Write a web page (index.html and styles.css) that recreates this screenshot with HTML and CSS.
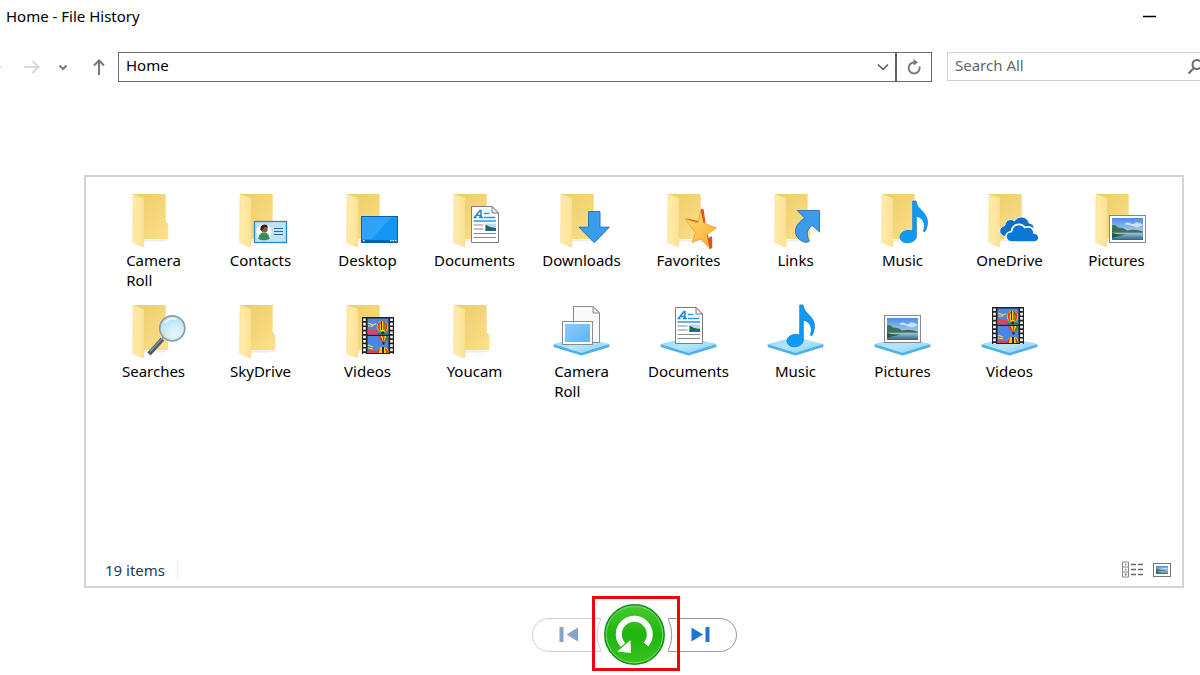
FILE: index.html
```
<!DOCTYPE html>
<html lang="en">
<head>
<meta charset="utf-8">
<title>Home - File History</title>
<link rel="stylesheet" href="styles.css">
</head>
<body>
<svg class="sprite" aria-hidden="true">
  <defs>
    <linearGradient id="g-back" x1="0" y1="0" x2="1" y2="1"><stop offset="0" stop-color="#ebcc68"/><stop offset="1" stop-color="#fde08a"/></linearGradient>
    <linearGradient id="g-leaf" x1="0" y1="0" x2="1" y2="0"><stop offset="0" stop-color="#ffecaa"/><stop offset="1" stop-color="#fde298"/></linearGradient>
    <linearGradient id="g-base" x1="0" y1="0" x2="1" y2="1"><stop offset="0" stop-color="#8fd7f7"/><stop offset=".5" stop-color="#b5e6fc"/><stop offset="1" stop-color="#79c9f2"/></linearGradient>
    <linearGradient id="g-sky" x1="0" y1="0" x2="0" y2="1"><stop offset="0" stop-color="#4a8fe0"/><stop offset="1" stop-color="#dcefff"/></linearGradient>
    <linearGradient id="g-lake" x1="0" y1="0" x2="0" y2="1"><stop offset="0" stop-color="#a5c6d8"/><stop offset="1" stop-color="#29628c"/></linearGradient>
    <linearGradient id="g-star" x1="0" y1="0" x2="1" y2="1"><stop offset="0" stop-color="#ffe27a"/><stop offset="1" stop-color="#f7a928"/></linearGradient>
    <linearGradient id="g-photo" x1="0" y1="0" x2="1" y2="1"><stop offset="0" stop-color="#8acbfa"/><stop offset="1" stop-color="#62b4f2"/></linearGradient>
    <radialGradient id="g-lens" cx=".6" cy=".7" r=".8"><stop offset="0" stop-color="#e9f8ff"/><stop offset="1" stop-color="#a9dcf7"/></radialGradient>
    <linearGradient id="g-green" x1="0" y1="0" x2="0" y2="1"><stop offset="0" stop-color="#4bcb32"/><stop offset=".5" stop-color="#20b50f"/><stop offset="1" stop-color="#38c41c"/></linearGradient>
  </defs>
  <symbol id="folder" viewBox="0 0 67 60">
    <path d="M24 49.500H51L42 51.500H24z" fill="#eeece6"/>
    <path d="M13 4H45.700V31.500L48.300 34V49H20z" fill="url(#g-back)"/>
    <path d="M13 4L24 8V56L23 57L12.700 52.500z" fill="url(#g-leaf)" stroke="#f3d687" stroke-width=".5"/>
  </symbol>
  <symbol id="base" viewBox="0 0 67 60">
    <path d="M5.700 43V46L33.500 54.500L61.300 46V43L33.500 51z" fill="#4eb0e8"/>
    <path d="M5.700 43L33.500 36L61.300 43L33.500 52z" fill="url(#g-base)"/>
  </symbol>
  <symbol id="contact" viewBox="0 0 67 60">
    <rect x="27.500" y="31.500" width="32" height="21" fill="#bfe3f8" stroke="#2f86c4" stroke-width="1.300"/>
    <circle cx="37" cy="42" r="7.500" fill="#fff"/>
    <path d="M31.500 49c0-5 3-6.500 5.500-6.500s5.500 1.500 5.500 6.500q-5.500 2.500-11 0z" fill="#3a8a63"/>
    <circle cx="37.300" cy="39" r="3.500" fill="#8a5a3c"/><path d="M33.500 40v-3q1-2.500 4-2.500t3.500 3l-4-.5-1 3z" fill="#2e2018"/>
    <path d="M47 38.500h9M47 41.500h9M47 44.500h9" stroke="#1f6ca8" stroke-width="1.200"/>
  </symbol>
  <symbol id="desktop" viewBox="0 0 67 60">
    <rect x="27.500" y="26.500" width="36" height="26" fill="#1496f6" stroke="#0c5fa5"/>
    <path d="M28 27H58L37 49H28z" fill="#3facfa" opacity=".6"/>
    <rect x="28" y="50" width="35" height="2" fill="#0b63b6"/>
    <path d="M29 50.700h1.500M56 50.700h1.500M58.500 50.700h1.500M61 50.700h1.500" stroke="#fff" stroke-width="1.300"/>
  </symbol>
  <symbol id="document" viewBox="0 0 67 60">
    <path d="M30.500 16.500H51L57.500 23V52.500H30.500z" fill="#fff" stroke="#7d7d7d"/>
    <path d="M51 16.500V23H57.500z" fill="#eee" stroke="#7d7d7d"/>
    <path d="M33.500 27.500L39 20.500H40V27.500M36 25.500H40M32.500 27.500h3M38 27.500h4" fill="none" stroke="#1c84d4" stroke-width="1.500"/>
    <path d="M43 23.500h5.500M43 27.500h11.500M32.500 31h22.500" stroke="#2b96e2" stroke-width="1.300"/>
    <path d="M32.500 35h10M32.500 39h10M32.500 43.500h22.500M32.500 47.500h22.500" stroke="#8c8c8c" stroke-width="1.100"/>
    <rect x="44.500" y="33.500" width="10.500" height="7.500" fill="#b9dcf5"/><path d="M44.500 34.500q4 3 10.500 3.500V41H44.500z" fill="#2a6546"/><path d="M44.500 39.500q5-1 10.500 0V41H44.500z" fill="#1e68a8"/>
  </symbol>
  <symbol id="download" viewBox="0 0 67 60"><path d="M40.500 21.500H52V37.200H61.300L46.300 52.700L31 37.200H40.500z" fill="#3a9cec" stroke="#2576bd"/></symbol>
  <symbol id="star" viewBox="0 0 67 60">
    <path d="M46.300 18.700L48.700 19.500L50.500 33L45 31zM57 46L57.300 57.500L55 59.500L50 50z" fill="#dd5428"/>
    <path d="M30 28L43 31L44.500 35z" fill="#d95525"/>
    <path d="M46 19.500L49 33L61.500 38L52 44.500L55 58.500L45.500 49L37 52.500L40.500 42.500L30.300 29.500L43 32.500z" fill="url(#g-star)" stroke="#e79526" stroke-width=".7"/>
    <path d="M46.300 19.500L49.300 33M52.500 45L55.200 58.500" fill="none" stroke="#dd5428" stroke-width="1.200"/>
  </symbol>
  <symbol id="link" viewBox="0 0 67 60"><path d="M35.300 20.500H57.500V42L50.500 35.500C45 38.500 43.500 44 47.500 51L44.500 52.500C37 51 33 46 33.500 40.500C34 34.500 38 31.500 42.500 28z" fill="#3c9bea" stroke="#2372b6" stroke-width=".9"/></symbol>
  <symbol id="music" viewBox="0 0 67 60">
    <path d="M43.700 11H47C48 20 59 22 58.500 33Q58 39 55.500 42L54.500 41C57 33 54 28 47.300 26V46C47.300 50 43 52.800 38.500 52.800C34 52.800 31 50.500 31 47C31 42 38 39 43.700 41z" fill="#119af4" stroke="#0c83d7" stroke-width=".8"/>
  </symbol>
  <symbol id="cloud" viewBox="0 0 67 60">
    <path d="M29 46.500C22 45 22 37 29 35.500C29 30 35 28 38.500 31C42 25 51 26 53 33C57 34 58 36 58 39L44 46z" fill="#0d6fc8" stroke="#fff" stroke-width=".8"/>
    <path d="M36.500 52C28 52 28 42 35.500 41.500C36 34 45 32 49 37.500C54 35.500 58 38.500 58 43C65 44 64 52 58.500 52z" fill="#0b78d8" stroke="#fff" stroke-width="1.700"/>
  </symbol>
  <symbol id="landscape" viewBox="0 0 31 21" preserveAspectRatio="none">
    <rect width="31" height="21" fill="url(#g-sky)"/>
    <path d="M12 6q3-3 6-1t6-1q4 0 7 3l-6 2q-6-2-13-3z" fill="#e8f4ff" opacity=".75"/>
    <path d="M0 7Q3 6 6 9Q12 9 15 12Q23 10 31 13V15H0z" fill="#3f7150"/>
    <rect y="14" width="31" height="7" fill="url(#g-lake)"/><path d="M0 14q8 3 18 1L6 17.500 0 19z" fill="#275945"/>
  </symbol>
  <symbol id="picture" viewBox="0 0 67 60"><rect x="26.500" y="25.500" width="36" height="27" fill="#fff" stroke="#8b8785"/><use href="#landscape" x="29" y="28" width="31" height="22"/></symbol>
  <symbol id="search-lens" viewBox="0 0 67 60">
    <path d="M42.500 38L29 53" stroke="#4d5c6a" stroke-width="4.500"/><path d="M43 36.500L30 50.500" stroke="#8796a2" stroke-width="1.200"/>
    <circle cx="52.300" cy="27.300" r="12.500" fill="url(#g-lens)" stroke="#8b9fab" stroke-width="1.700"/>
    <path d="M43 22Q42 33 50 37Q42 35 41.500 28z" fill="#d8e6a7"/><path d="M45 22q4-6 11-4" stroke="#fff" stroke-width="1.500" fill="none"/>
  </symbol>
  <symbol id="film" viewBox="0 0 67 60">
    <rect x="28" y="16" width="32" height="37" fill="#222"/>
    <path d="M30.500 17.500V53M57.500 17.500V53" stroke="#fff" stroke-width="2.600" stroke-dasharray="2.600 1.700"/>
    <rect x="33.500" y="17.500" width="21" height="16" fill="#4a86e4"/><rect x="33.500" y="35" width="21" height="17" fill="#4a86e4"/>
    <path d="M34 22l5 2 3-1.500M34 25l5 0M34 47l5 1M34 44l5 2" fill="none" stroke="#f0d94b" stroke-width="1.200"/>
    <path d="M33.500 29l3-1 3 1 3-1 2 5.500h-11z" fill="#e5435c"/><path d="M43 31.500h11.500v2H43z" fill="#2b8b45"/><path d="M33.500 50q6-3 11 2h-11z" fill="#d84357"/>
    <circle cx="48.500" cy="25.500" r="5.700" fill="#f6d522"/>
    <path d="M44.500 21.500q-2 4 .5 8l2 1.500q-2.500-5 0-10zM52.500 21.500q2 4-.5 8l-2 1.500q2.500-5 0-10z" fill="#e33e20"/>
    <path d="M47.500 20v9M50 20v9" stroke="#302d20"/><rect x="47.500" y="30.500" width="2.500" height="2.500" fill="#302317"/>
    <path d="M44.500 35h10q0 3-4 6h-2q-4-3-4-6z" fill="#d83a3c"/><path d="M46.500 35h2l1 6zM50.500 35h2l-2.500 6z" fill="#f4d421"/><path d="M52.500 35h2q0 3-4 6z" fill="#2b8b45"/><rect x="48.500" y="41" width="2" height="2.500" fill="#302317"/>
    <path d="M43 52q0-6 6-6t5.500 6z" fill="#f4d421"/><path d="M43 52q0-4 3-5l-1 5M51 47q3 1 3 5h-2z" fill="#e33420"/><path d="M48 46h2v6h-2z" fill="#302d20"/>
  </symbol>
  <symbol id="roll" viewBox="0 0 67 60">
    <path d="M25.500 5.500H45L51.500 12V41.500H25.500z" fill="#fafafa" stroke="#8b8b8b"/><path d="M45 5.500V12H51.500z" fill="#eee" stroke="#8b8b8b"/>
    <rect x="14.500" y="20.500" width="30" height="23" fill="#fff" stroke="#8b8b8b"/><rect x="17" y="23" width="25" height="18" fill="url(#g-photo)"/>
  </symbol>
</svg>

<div class="window">
  <header class="titlebar">
    <h1 class="title">Home - File History</h1>
    <button class="minimize" aria-label="Minimize"><svg width="14" height="14"><path d="M0 7.500h13" stroke="#000" stroke-width="1.500"/></svg></button>
  </header>

  <div class="toolbar">
    <nav class="nav" aria-label="History">
      <button class="nav-btn nav-back" aria-label="Back"><svg width="16" height="16" viewBox="0 0 16 16"><path d="M15 8H1M7 2L1 8l6 6" transform="translate(-14 0)"/></svg></button>
      <button class="nav-btn nav-forward" aria-label="Forward"><svg width="16" height="16" viewBox="0 0 16 16"><path d="M0 8h15M8.500 2l6 6-6 6"/></svg></button>
      <button class="nav-btn nav-recent" aria-label="Recent locations"><svg width="10" height="16" viewBox="0 0 10 16"><path d="M1.500 6.500L5 10l3.500-3.500"/></svg></button>
      <button class="nav-btn nav-up" aria-label="Up"><svg width="12" height="16" viewBox="0 0 12 16"><path d="M6 16V1.500M1 6.500l5-5 5 5"/></svg></button>
    </nav>
    <div class="address">
      <input class="address-input" type="text" value="Home" aria-label="Address">
      <button class="address-drop" aria-label="Previous locations"><svg width="12" height="12" viewBox="0 0 12 12"><path d="M1 3.500l5 5 5-5" fill="none" stroke="#555" stroke-width="1.500"/></svg></button>
      <button class="refresh" aria-label="Refresh"><svg width="14" height="16" viewBox="0 0 14 16"><path d="M7.500 3.500A5.500 5.500 0 1 0 12.400 7.500" fill="none" stroke="#777" stroke-width="1.900"/><path d="M6.500 0v6.500L11 3.500z" fill="#777"/></svg></button>
    </div>
    <label class="search">
      <input class="search-input" type="text" placeholder="Search All" aria-label="Search All">
      <svg class="search-icon" width="15" height="16" viewBox="0 0 15 16"><circle cx="9" cy="5.500" r="4.500"/><path d="M6 9L.5 14.500"/></svg>
    </label>
  </div>

  <main class="panel">
    <ul class="items">
      <li class="item"><svg class="icon"><use href="#folder"/></svg><span class="label">Camera Roll</span></li>
      <li class="item"><svg class="icon"><use href="#folder"/><use href="#contact"/></svg><span class="label">Contacts</span></li>
      <li class="item"><svg class="icon"><use href="#folder"/><use href="#desktop"/></svg><span class="label">Desktop</span></li>
      <li class="item"><svg class="icon"><use href="#folder"/><use href="#document"/></svg><span class="label">Documents</span></li>
      <li class="item"><svg class="icon"><use href="#folder"/><use href="#download"/></svg><span class="label">Downloads</span></li>
      <li class="item"><svg class="icon"><use href="#folder"/><use href="#star"/></svg><span class="label">Favorites</span></li>
      <li class="item"><svg class="icon"><use href="#folder"/><use href="#link"/></svg><span class="label">Links</span></li>
      <li class="item"><svg class="icon"><use href="#folder"/><use href="#music"/></svg><span class="label">Music</span></li>
      <li class="item"><svg class="icon"><use href="#folder"/><use href="#cloud"/></svg><span class="label">OneDrive</span></li>
      <li class="item"><svg class="icon"><use href="#folder"/><use href="#picture"/></svg><span class="label">Pictures</span></li>
      <li class="item"><svg class="icon"><use href="#folder"/><use href="#search-lens"/></svg><span class="label">Searches</span></li>
      <li class="item"><svg class="icon"><use href="#folder"/></svg><span class="label">SkyDrive</span></li>
      <li class="item"><svg class="icon"><use href="#folder"/><use href="#film"/></svg><span class="label">Videos</span></li>
      <li class="item"><svg class="icon"><use href="#folder"/></svg><span class="label">Youcam</span></li>
      <li class="item"><svg class="icon"><use href="#base"/><use href="#roll"/></svg><span class="label">Camera Roll</span></li>
      <li class="item"><svg class="icon"><use href="#base"/><use href="#document" x="-10" y="-10"/></svg><span class="label">Documents</span></li>
      <li class="item"><svg class="icon"><use href="#base"/><use href="#music" x="-6" y="-7"/></svg><span class="label">Music</span></li>
      <li class="item"><svg class="icon"><use href="#base"/><use href="#picture" x="-11" y="-11"/></svg><span class="label">Pictures</span></li>
      <li class="item"><svg class="icon"><use href="#base"/><use href="#film" x="-12" y="-10"/></svg><span class="label">Videos</span></li>
    </ul>
    <footer class="status">
      <span class="count">19 items</span>
      <button class="view-btn" aria-label="Details view"><svg width="22" height="18" viewBox="0 0 22 18"><path d="M.5 1h6v15h-6zM.5 6h6M.5 11h6" fill="#fff" stroke="#888"/><path d="M9 3.500h5M16 3.500h5M9 8.500h5M16 8.500h5M9 13.500h5M16 13.500h5" stroke="#666" stroke-width="1.300"/><path d="M3 3.500h1.500" stroke="#777" stroke-width="1.500"/><path d="M3 8.500h1.500" stroke="#3a8cdc" stroke-width="1.500"/><path d="M3 13.500h1.500" stroke="#e33" stroke-width="2"/></svg></button>
      <button class="view-btn" aria-label="Large icons view"><svg width="18" height="14" viewBox="0 0 18 14"><rect x=".5" y=".5" width="17" height="13" fill="#fff" stroke="#777"/><use href="#landscape" x="3" y="3" width="12" height="8"/></svg></button>
    </footer>
  </main>

  <div class="controls">
    <button class="step" aria-label="Previous version"><svg width="69" height="34" viewBox="0 0 69 34"><path d="M69 .5H17a16.500 16.500 0 0 0 0 33H69Q61.500 17 69 .5z" fill="#fff" stroke="#d0d0d4"/><path d="M27.500 9h4v15h-4zM46 9.500v14L34.500 16.500z" fill="#86a4cb"/></svg></button>
    <div class="restore-wrap">
      <button class="restore" aria-label="Restore"><svg width="61" height="61" viewBox="0 0 61 61"><circle cx="30.500" cy="30.500" r="29.700" fill="url(#g-green)" stroke="#148d20" stroke-width="1.500"/><circle cx="30.500" cy="30.500" r="28.300" fill="none" stroke="#7ddb68"/><path d="M42 40.500A15.500 15.500 0 1 0 19 41" fill="none" stroke="#fff" stroke-width="6"/><path d="M13.500 47.500L27 49L26.500 36z" fill="#fff"/></svg></button>
    </div>
    <button class="step" aria-label="Next version"><svg width="69" height="34" viewBox="0 0 69 34"><path d="M0 .5H52a16.500 16.500 0 0 1 0 33H0Q7.500 17 0 .5z" fill="#fff" stroke="#96969e"/><path d="M37.500 9h4v15h-4zM23.500 9.500v14L35 16.500z" fill="#1f74d0"/></svg></button>
  </div>
</div>
</body>
</html>
```
FILE: styles.css
```
* {
  box-sizing: border-box;
}

body {
  margin: 0;
  background: #fff;
  color: #000;
  font-family: "Noto Sans", "Open Sans", sans-serif;
  font-size: 15px;
  line-height: 20px;
}

button {
  display: flex;
  align-items: center;
  justify-content: center;
  padding: 0;
  border: 0;
  background: none;
}

input {
  min-width: 0;
  padding: 0;
  border: 0;
  outline: 0;
  background: none;
  color: inherit;
  font: inherit;
}

svg {
  display: block;
}

.sprite {
  position: absolute;
  width: 0;
  height: 0;
}

.window {
  display: flex;
  flex-direction: column;
  min-height: 100vh;
  overflow: hidden;
}

.titlebar {
  display: flex;
  align-items: center;
  justify-content: space-between;
  height: 32px;
  padding: 0 43px 0 6px;
}

.title {
  margin: 0;
  font-size: 15px;
  font-weight: 400;
}

.toolbar {
  display: flex;
  margin: 20px 0 93px;
}

.nav {
  display: flex;
  align-items: center;
  width: 118px;
  flex: none;
}

.nav-btn svg {
  fill: none;
  stroke: #777;
  stroke-width: 2;
}

.nav-forward {
  margin-left: 8px;
}

.nav-back svg,
.nav-forward svg {
  stroke: #d9d9d9;
}

.nav-recent {
  margin-left: 18px;
}

.nav-up {
  margin-left: 25px;
}

.address {
  display: flex;
  flex: 1;
  height: 30px;
  border: 1px solid #6b6b6b;
}

.address-input {
  flex: 1;
  padding: 0 7px 4px;
}

.address-drop {
  width: 24px;
}

.refresh {
  width: 36px;
  border-left: 2px solid #5f5f5f;
}

.search {
  display: flex;
  align-items: center;
  width: 253px;
  height: 29px;
  flex: none;
  margin-left: 15px;
  border: 1px solid #d2d2d2;
  border-right: 0;
}

.search-input {
  flex: 1;
  padding: 0 7px 3px;
}

.search-input::placeholder {
  color: #666;
  opacity: 1;
}

.search-icon {
  flex: none;
  margin-right: -3px;
  fill: none;
  stroke: #6a6a6a;
  stroke-width: 2;
}

.panel {
  display: flex;
  flex: 1;
  flex-direction: column;
  margin: 0 16px 0 84px;
  border: 2px solid #d3d3d3;
}

.items {
  display: grid;
  flex: 1;
  grid-template-columns: repeat(auto-fill, 107px);
  align-content: start;
  row-gap: 11px;
  margin: 0;
  padding: 13px 11px 0 14px;
  list-style: none;
}

.item {
  display: flex;
  flex-direction: column;
  align-items: center;
}

.icon {
  width: 67px;
  height: 60px;
}

.label {
  width: min-content;
}

.status {
  display: flex;
  align-items: center;
  gap: 9px;
  height: 32px;
  padding: 0 11px 0 19px;
  color: #1e395b;
}

.count {
  margin-right: auto;
  padding-right: 12px;
  border-right: 1px solid #eee;
}

.controls {
  display: flex;
  align-items: center;
  justify-content: center;
  gap: 3px;
  margin: 16px 15px 10px 84px;
}

.restore-wrap {
  position: relative;
}

.restore-wrap::after {
  content: "";
  position: absolute;
  inset: -8px -15px -6px -12px;
  border: 3px solid #f0000c;
  pointer-events: none;
}
```
